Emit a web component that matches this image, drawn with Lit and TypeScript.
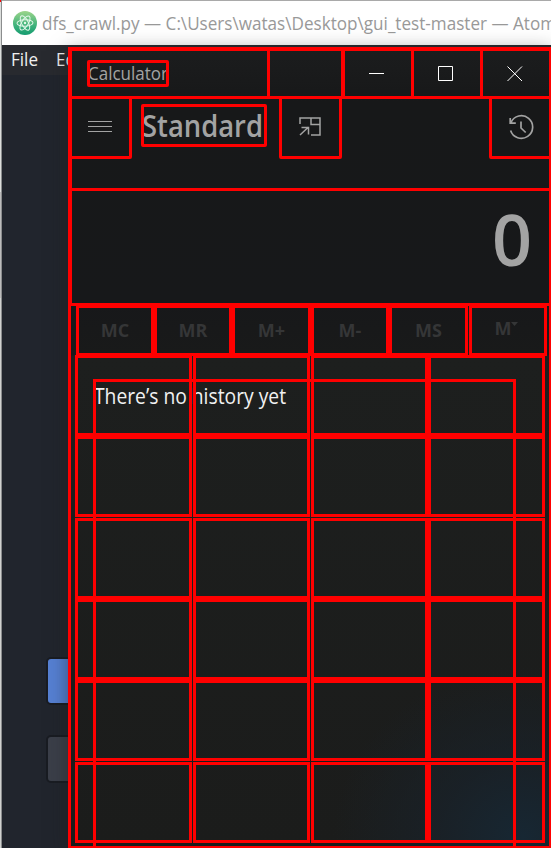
import { LitElement, html, css, svg } from "lit";
import { customElement } from "lit/decorators.js";
import { styleMap } from "lit/directives/style-map.js";

const MEMORY_KEYS = ["MC", "MR", "M+", "M-", "MS", "M"];
const KEY_CELLS = Array.from({ length: 24 }, (_, i) => i);

/** A line of text stretched to an exact width once its font has been laid out. */
@customElement("fit-text")
class FitText extends LitElement {
  static properties = { width: { type: Number }, scale: { state: true } };
  declare width: number;
  declare scale: number;

  static styles = css`
    :host {
      display: block;
      white-space: pre;
    }
    .line {
      display: inline-block;
      transform-origin: 0 50%;
    }
  `;

  constructor() {
    super();
    this.width = 0;
    this.scale = 1;
  }

  firstUpdated() {
    const line = this.renderRoot.querySelector(".line") as HTMLElement;
    if (this.width && line.offsetWidth) {
      this.scale = this.width / line.getBoundingClientRect().width;
    }
  }

  render() {
    return html`<span class="line" style=${styleMap({ transform: `scaleX(${this.scale})` })}><slot></slot></span>`;
  }
}

@customElement("calculator-window")
class CalculatorWindow extends LitElement {
  static styles = css`
    :host {
      display: block;
      box-sizing: border-box;
      color: #a3a3a3;
      background:
        radial-gradient(ellipse 190px 170px at 455px 790px, #172733 0%, rgba(25, 34, 42, 0.75) 45%, rgba(27, 29, 29, 0) 100%),
        linear-gradient(#1c1d1e 0, #171819 55px, #17181a 255px, #191a1a 308px, #1d1f1e 309px, #1b1c1b 100%);
    }
    .box {
      position: relative;
      box-sizing: border-box;
    }
    .box::after {
      content: "";
      position: absolute;
      inset: 0;
      border: 3px solid #f00;
      pointer-events: none;
    }
    .frame {
      height: 100%;
      padding: 1px 0 0 1px;
      display: flex;
      flex-direction: column;
      overflow: hidden;
    }
    .frame::after {
      border-right-width: 2px;
      border-bottom-width: 2px;
    }
    .round::after {
      border-radius: 2px;
    }
    .titlebar {
      flex: none;
      width: 483px;
      height: 51px;
      display: flex;
    }
    .caption {
      width: 201px;
      padding: 12px 0 0 18px;
      box-sizing: border-box;
    }
    .name {
      width: 82px;
      height: 27px;
      font-size: 18px;
      line-height: 27px;
      padding-left: 1px;
    }
    .grip {
      width: 77px;
      margin-left: -3px;
      margin-right: 1px;
    }
    .winbtn {
      width: 72px;
      margin-left: -3px;
      padding-right: 2px;
      display: flex;
      align-items: center;
      justify-content: center;
      color: #fff;
    }
    .header {
      flex: none;
      width: 484px;
      height: 95px;
      margin-top: -3px;
      display: flex;
      align-items: flex-start;
    }
    .iconbtn {
      width: 63px;
      height: 63px;
      padding: 0 1px 2px 0;
      display: flex;
      align-items: center;
      justify-content: center;
    }
    .mode {
      width: 126px;
      height: 43px;
      margin: 8px 12px 0 9px;
      font-size: 30px;
      font-weight: 600;
      line-height: 44px;
      padding-left: 1px;
    }
    .history {
      margin-left: 147px;
      padding-left: 3px;
    }
    .display {
      flex: none;
      width: 484px;
      height: 118px;
      margin-top: -3px;
      display: flex;
      justify-content: flex-end;
      align-items: center;
      padding: 0 21px 17px 0;
      font-size: 70px;
      font-weight: 600;
      line-height: 80px;
    }
    .memory {
      flex: none;
      margin: -1px 0 0 7px;
      display: grid;
      grid-template-columns: 78px 78px 79px 78px 80px 78px;
      color: #353637;
      font-size: 18px;
      font-weight: 700;
    }
    .mem {
      height: 51px;
      display: flex;
      align-items: center;
      justify-content: center;
      padding: 0 0 1px 0;
    }
    .mem:nth-child(5) {
      width: 79px;
    }
    .last {
      padding: 0 3px 5px 0;
    }
    .last svg {
      margin: -9px 0 0 0;
    }
    .body {
      flex: none;
      margin: -1px 0 0 6px;
      display: grid;
    }
    .keys,
    .panel {
      grid-area: 1 / 1;
    }
    .panel {
      margin: 24px 0 0 18px;
      width: 423px;
      height: 490px;
      padding: 2px 0 0 1px;
      color: #f1f1f1;
      font-size: 21px;
      line-height: 30px;
    }
    .keys {
      z-index: 1;
      display: grid;
      grid-template-columns: 118px 118px 117px 117px;
      grid-template-rows: 81px 82px 81px 81px 82px 81px;
    }
    .key {
      width: 117px;
      height: 81px;
    }
    svg {
      display: block;
      fill: none;
      stroke: currentColor;
    }
  `;

  render() {
    return html`
      <div class="box frame">
        <div class="box titlebar">
          <div class="caption">
            <div class="box round name"><fit-text width="80">Calculator</fit-text></div>
          </div>
          <div class="box grip"></div>
          <div class="box winbtn">
            <svg width="16" height="16"><path d="M0 7.5h15" /></svg>
          </div>
          <div class="box winbtn">
            <svg width="16" height="16"><path d="M.5 .5h14v14h-14z" /></svg>
          </div>
          <div class="box winbtn">
            <svg width="16" height="16"><path d="M.5 .5l14.500 14.500M15 .5l-14.500 14.500" /></svg>
          </div>
        </div>
        <div class="box header">
          <div class="box round iconbtn">
            <svg width="24" height="12"><path d="M0 .5h24M0 5.500h24M0 10.500h24" /></svg>
          </div>
          <div class="box round mode"><fit-text width="121">Standard</fit-text></div>
          <div class="box round iconbtn">
            <svg width="22" height="19" stroke-width="1.5">
              <path d="M1 7V1h20v17h-9M12 1v6.500h9M1 18l8.500-8M2.500 10.500H9.500V17.500" />
            </svg>
          </div>
          <div class="box round iconbtn history">
            <svg width="25" height="26" stroke-width="1.7">
              <path d="M2 8.500A11.300 11.300 0 1 1 1.600 16.500M1.200 4v5.200h5.600M12 7.500v6.500l4.700 4.500" />
            </svg>
          </div>
        </div>
        <div class="box display">0</div>
        <div class="memory">
          ${MEMORY_KEYS.map((key, i) =>
            i === 5
              ? html`<div class="box mem last">
                  ${key}<svg width="7" height="4"><path d="M0 0h7L3.500 4z" fill="currentColor" stroke="none" /></svg>
                </div>`
              : html`<div class="box mem">${key}</div>`
          )}
        </div>
        <div class="body">
          <div class="box panel"><fit-text width="192">There’s no history yet</fit-text></div>
          <div class="keys">${KEY_CELLS.map(() => html`<div class="box key"></div>`)}</div>
        </div>
      </div>
    `;
  }
}

const atomMark = svg`
  <circle cx="12" cy="12" r="12" fill="url(#leaf)" />
  <g fill="none" stroke="#e4f7ea" stroke-width="1">
    <ellipse cx="12" cy="12" rx="3.300" ry="8" transform="rotate(-28 12 12)" />
    <ellipse cx="12" cy="12" rx="3.300" ry="8" transform="rotate(32 12 12)" />
    <ellipse cx="12" cy="12" rx="3.300" ry="8" transform="rotate(88 12 12)" />
  </g>
  <circle cx="12" cy="12" r="1.200" fill="#e4f7ea" />`;

@customElement("app-root")
class AppRoot extends LitElement {
  static styles = css`
    :host {
      display: block;
      position: relative;
      width: 551px;
      height: 848px;
      overflow: hidden;
      font-family: "Open Sans", "Noto Sans", sans-serif;
      background: #21252d;
    }
    .desktop {
      display: flex;
      height: 100%;
    }
    .edge {
      flex: none;
      width: 2px;
      box-sizing: border-box;
      border-right: 1px solid #8b8d8e;
      background: linear-gradient(#f00 2px, #dcdedc 2px 192px, #bcbcbc 192px 298px, #d0d2d0 298px);
    }
    .editor {
      flex: 1;
      min-width: 0;
      display: flex;
      flex-direction: column;
    }
    .title {
      flex: none;
      height: 45px;
      box-sizing: border-box;
      border-top: 1px solid #a9a9a9;
      background: #fff;
      display: flex;
      align-items: center;
      gap: 5px;
      padding: 0 0 1px 11px;
      color: #999;
      font-size: 19px;
      overflow: hidden;
    }
    .title svg {
      flex: none;
    }
    .menu {
      height: 30px;
      background: #282a2f;
      display: flex;
      gap: 18px;
      padding-left: 9px;
      color: #f0f0f0;
      font-size: 17.5px;
      line-height: 29px;
    }
    .menu fit-text {
      width: 27px;
    }
    .workspace {
      padding: 582px 0 0 44px;
      display: flex;
      flex-direction: column;
      gap: 30px;
    }
    .button {
      width: 60px;
      height: 44px;
      border: 2px solid #191c22;
      border-radius: 5px;
      background: #3b3f49;
    }
    .primary {
      background: #5680d3;
    }
    calculator-window {
      position: absolute;
      left: 68px;
      top: 47px;
      width: 483px;
      height: 801px;
      box-shadow: 0 4px 18px rgba(28, 30, 28, 0.5);
    }
  `;

  render() {
    return html`
      <div class="desktop">
        <div class="edge"></div>
        <div class="editor">
          <div class="title">
            <svg width="24" height="24">
              <defs>
                <linearGradient id="leaf" x1="0" y1="0" x2="0" y2="1">
                  <stop offset="0" stop-color="#9cd58a" />
                  <stop offset="0.6" stop-color="#3fb27c" />
                  <stop offset="1" stop-color="#149c70" />
                </linearGradient>
              </defs>
              ${atomMark}
            </svg>
            <fit-text width="514">dfs_crawl.py — C:\\Users\\watas\\Desktop\\gui_test-master — Atom</fit-text>
          </div>
          <div class="menu"><fit-text width="27">File</fit-text><fit-text width="30">Edit</fit-text></div>
          <div class="workspace">
            <div class="button primary"></div>
            <div class="button"></div>
          </div>
        </div>
      </div>
      <calculator-window></calculator-window>
    `;
  }
}
